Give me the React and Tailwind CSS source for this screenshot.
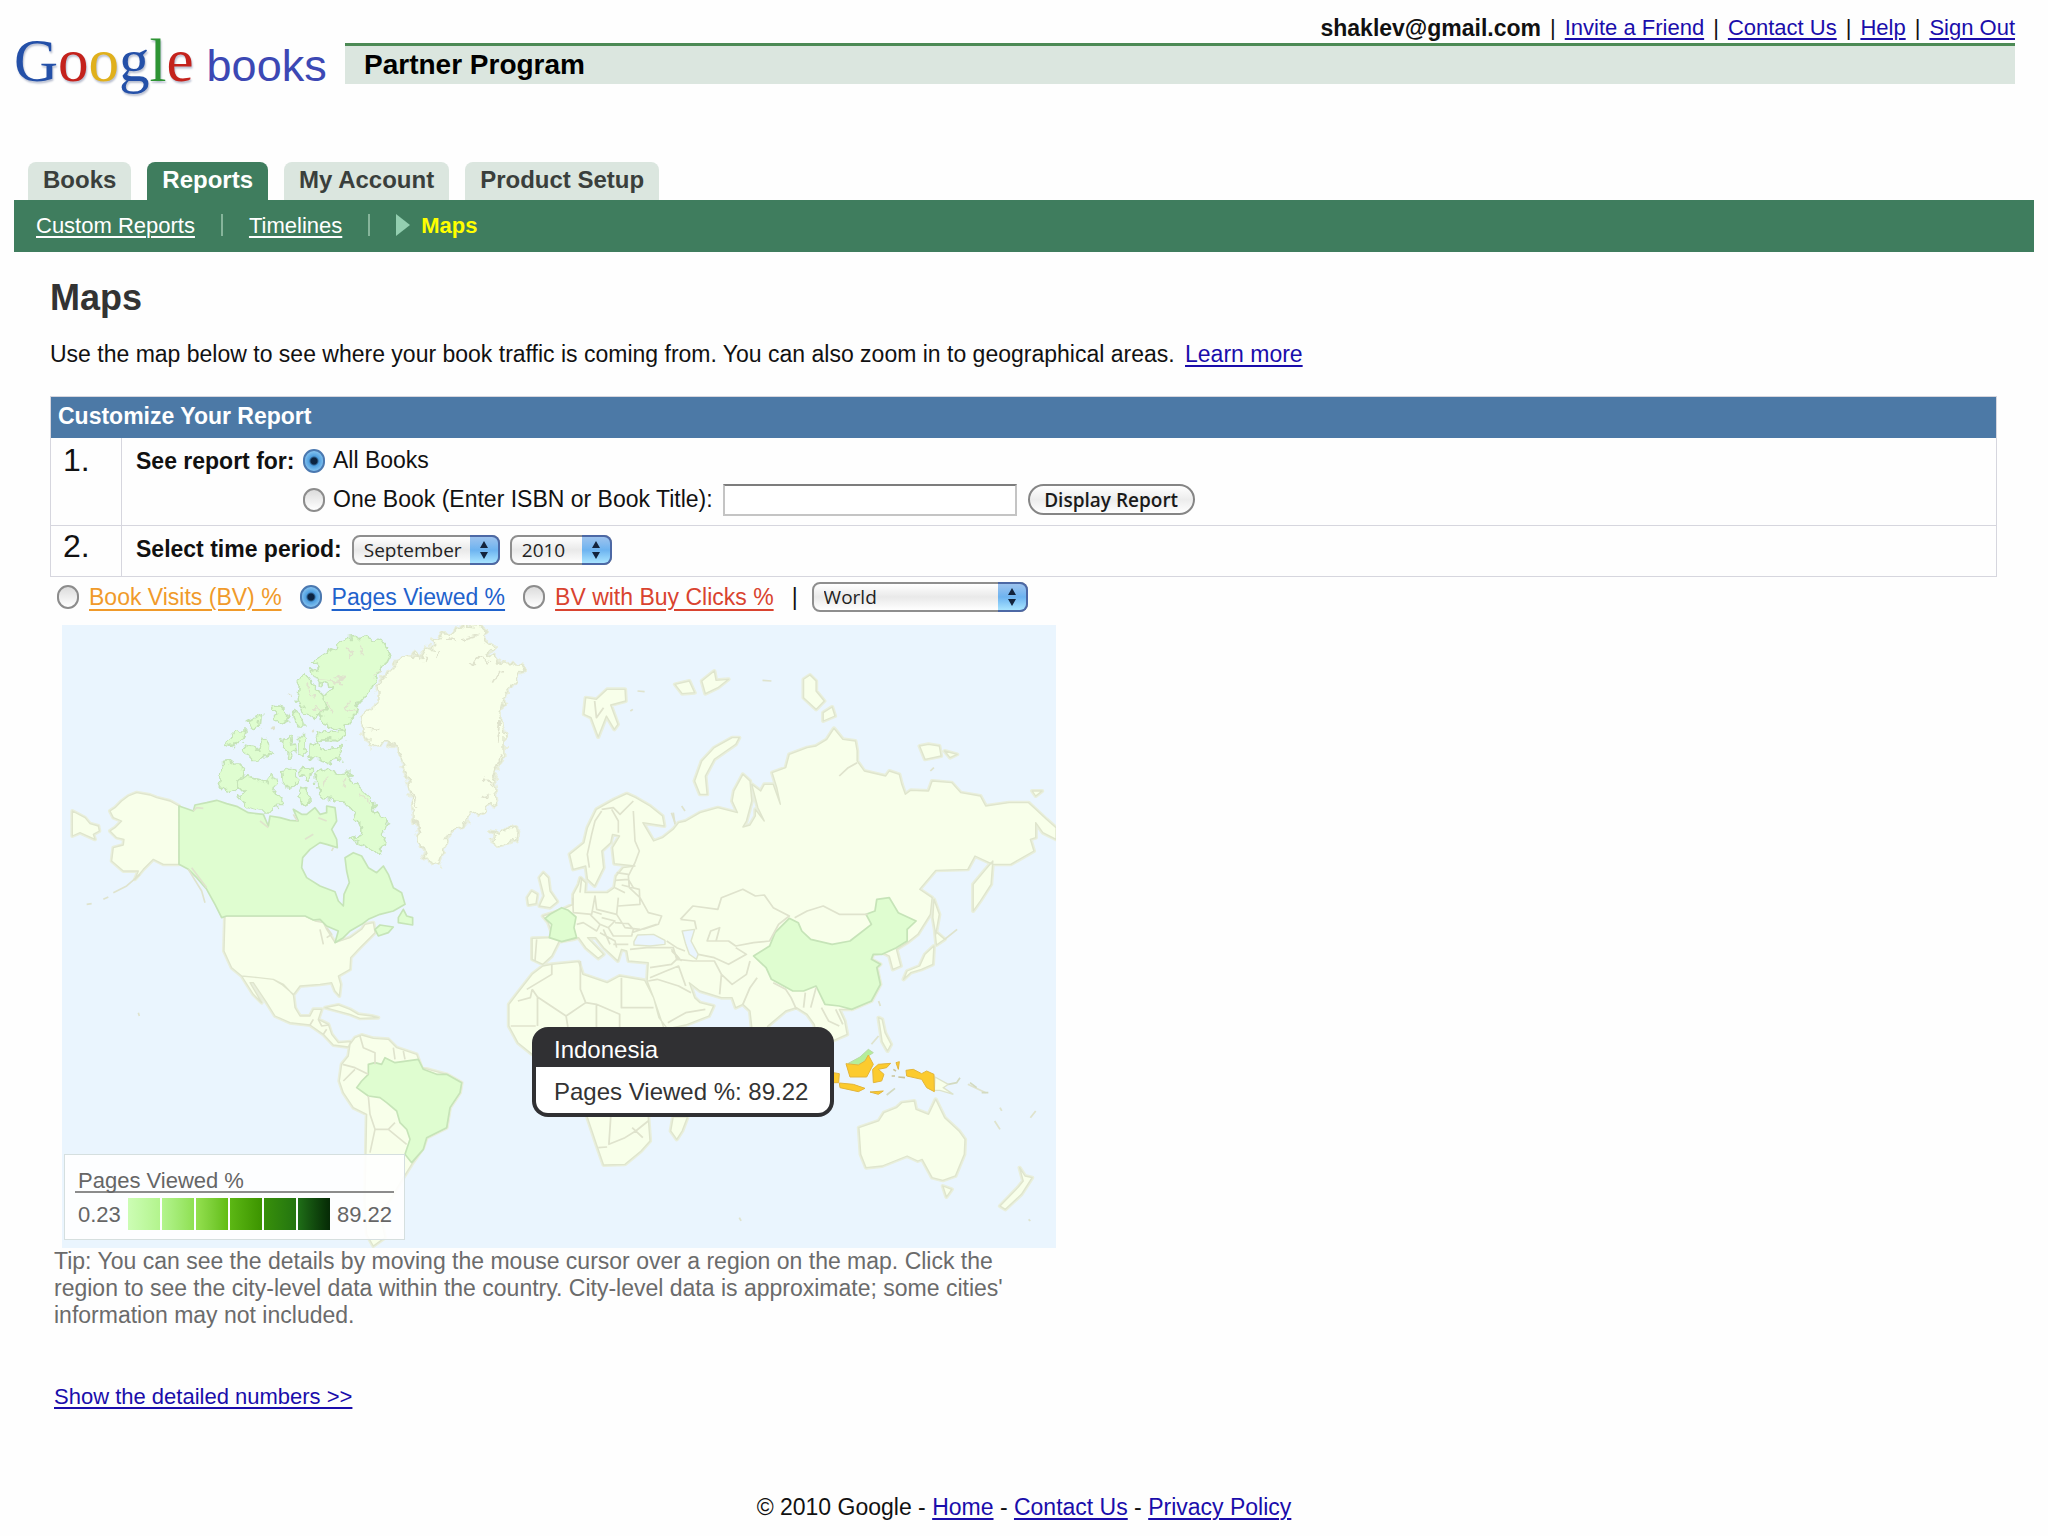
import React from "react";

const link = "text-[#1a0dab] underline underline-offset-3 decoration-2";

// Shapes are grouped by map sheet; every sheet has its own origin and scale.
const americas = {
  transform: "translate(60 620) scale(0.33333)",
  land: [
    "M357,555 330,540 290,530 270,522 230,515 205,525 185,540 165,560 150,570 160,590 185,600 165,620 150,630 170,650 192,655 190,672 160,680 155,720 190,750 235,750 225,775 250,745 280,715 310,730 357,730Z",
    "M37,570 75,590 90,608 115,615 118,630 100,640 105,655 60,635 37,645Z",
    "M495,885 735,885 765,900 790,905 800,925 825,965 870,950 905,925 915,910 940,905 945,935 900,980 872,1010 870,1045 835,1065 842,1090 838,1125 825,1110 815,1085 780,1090 720,1095 700,1122 670,1090 640,1075 595,1070 545,1065 515,1040 492,990Z",
    "M545,1065 595,1070 640,1075 665,1090 700,1120 705,1160 720,1185 750,1185 760,1165 785,1165 775,1195 805,1210 815,1240 835,1265 872,1262 865,1278 820,1272 790,1240 750,1212 690,1205 645,1185 620,1145 580,1085 570,1085 605,1145 580,1120Z",
    "M870,1270 885,1250 905,1242 940,1252 985,1255 1010,1280 1070,1300 1085,1340 1160,1360 1205,1385 1200,1415 1170,1460 1160,1520 1100,1550 1090,1580 1055,1630 1030,1670 1000,1720 960,1780 975,1850 940,1875 920,1840 915,1740 920,1480 880,1460 850,1415 838,1380 845,1330 865,1305Z",
    "M795,1160 835,1152 870,1165 895,1180 935,1185 955,1190 900,1192 870,1180Z",
  ],
  green: [
    "M357,555 385,565 400,570 405,552 440,545 470,538 500,548 530,556 565,575 610,580 625,615 630,585 660,590 690,598 715,600 700,565 725,580 740,580 765,560 780,580 800,575 800,555 825,560 830,600 815,625 830,655 832,680 800,670 780,665 750,685 728,710 725,740 740,770 780,795 825,812 835,840 850,855 852,820 868,785 860,750 855,710 880,695 905,705 925,740 950,755 970,735 985,760 1000,800 1025,815 1035,850 1000,870 960,880 925,895 905,910 870,930 850,950 825,965 835,930 800,915 780,895 760,897 735,885 500,885 485,890 465,850 440,805 410,770 385,745 357,730Z",
    "M1015,890 1030,865 1040,885 1058,890 1058,912 1015,905Z",
    "M945,925 960,912 1000,918 985,935 955,945Z",
    "M925,1360 925,1330 945,1325 965,1330 975,1310 1005,1325 1075,1315 1090,1345 1130,1360 1160,1360 1205,1385 1200,1415 1170,1460 1160,1520 1100,1550 1090,1585 1055,1625 1035,1600 1050,1555 1040,1525 1020,1505 1010,1470 980,1445 960,1430 925,1425 890,1400 905,1380Z",
  ],
  lines: [
    "M900,1245 910,1280 945,1295 945,1330",
    "M1000,1280 1005,1315M1030,1290 1035,1315",
    "M848,1330 885,1340 925,1360M885,1345 850,1380",
    "M925,1425 930,1480 945,1525 930,1595",
    "M945,1525 985,1525 1005,1505M985,1525 1040,1570",
    "M240,760 200,795 160,815M145,828 130,835M95,848 80,850",
    "M385,745 425,810 435,845M395,740 440,800",
    "M750,1212 760,1195M775,1195 785,1215 805,1212M790,1240 800,1225",
    "M780,925 790,970M800,920 815,940 800,950",
    "M235,1175 238,1185",
    "M400,570 410,560 430,562M600,600 625,620M700,580 712,600M760,640 735,655M800,600 775,590M815,690 820,680",
  ],
};

const arctic = {
  transform: "translate(60 620) scale(0.33333)",
  land: [
    "M1010,120 1030,108 1060,112 1072,92 1085,108 1100,80 1120,85 1115,55 1140,60 1150,35 1175,40 1210,12 1255,15 1275,28 1270,50 1305,78 1280,100 1310,112 1320,130 1350,128 1385,130 1392,150 1365,185 1335,220 1320,280 1335,340 1335,400 1310,450 1300,480 1310,540 1270,570 1225,580 1220,605 1165,635 1150,690 1135,732 1100,715 1080,660 1065,600 1050,510 1035,440 1015,385 970,362 935,375 915,340 905,290 960,245 960,215 950,195 975,165 1000,140Z",
    "M1290,630 1320,640 1345,618 1375,625 1370,655 1320,675 1295,660 1305,648Z",
  ],
  green: [
    "M765,455 800,445 830,455 865,450 880,480 910,510 940,540 945,570 960,590 990,610 965,625 975,650 960,695 935,690 920,685 895,665 870,655 900,640 905,620 895,600 870,560 855,545 830,540 790,530 768,500Z",
    "M550,465 590,475 620,490 635,450 650,490 645,520 670,550 650,550 640,570 600,570 560,560 535,530 550,510 530,490Z",
    "M485,425 520,420 550,445 545,475 520,505 500,515 478,490Z",
    "M680,440 705,445 708,490 690,503 668,485 665,460Z",
    "M720,440 758,442 745,475 725,470Z",
    "M730,500 745,520 748,545 725,550 720,520Z",
    "M825,80 850,55 885,50 920,48 970,65 993,95 975,130 960,150 950,170 920,220 890,255 885,280 865,300 855,330 790,310 780,290 800,260 790,225 815,200 780,190 755,150 780,140 755,125 800,95Z",
    "M735,155 755,185 790,225 800,265 765,295 735,270 712,235 715,185Z",
    "M750,375 765,365 780,385 840,380 845,415 800,425 750,410Z",
    "M775,335 820,330 858,335 850,362 820,355 770,358Z",
    "M548,385 560,370 590,375 598,390 610,350 640,390 620,405 575,420Z",
    "M500,370 525,330 558,330 550,360 520,380Z",
    "M670,355 695,350 705,395 685,405 665,380Z",
    "M712,350 735,350 735,410 715,400Z",
    "M640,250 670,260 690,300 665,310 645,290Z",
    "M700,275 720,280 735,315 710,315Z",
    "M565,300 605,278 600,320 580,325Z",
  ],
  lines: [
    "M820,165 855,170 825,190M860,75 880,95 870,110M780,180 850,185 830,160M870,240 850,265 885,270M800,240 820,280",
    "M740,190 760,230M765,260 790,275M860,470 850,500M895,520 930,545M800,460 795,500M900,70 905,100M940,165 965,150",
    "M1100,110 1090,125M1140,90 1130,105M1230,135 1250,110 1290,120M1300,185 1320,150M1200,60 1260,45M1160,60 1185,50",
    "M1055,510 1070,560M1065,590 1080,640M1320,300 1310,360M1325,400 1300,470M1270,470 1300,500M1260,520 1295,530",
    "M640,320 645,330M685,215 690,225M755,320 762,330M920,320 955,325",
  ],
};

const oldWorld = {
  transform: "translate(500 620) scale(0.35714 0.33333)",
  land: [
    "M205,745 195,700 235,665 245,620 270,565 320,535 355,518 380,530 420,555 455,585 460,615 400,605 430,660 455,650 485,625 500,605 520,600 560,575 610,560 665,575 650,540 655,510 665,490 680,460 700,480 705,540 690,600 680,618 700,612 715,585 715,565 740,600 722,560 705,490 730,510 740,490 765,490 785,550 775,500 762,455 800,440 810,400 860,380 885,375 915,355 935,322 960,355 995,360 1000,390 1000,420 1020,450 1080,465 1090,450 1118,460 1125,490 1135,520 1150,508 1200,510 1210,480 1265,485 1290,515 1345,525 1360,555 1425,545 1480,545 1500,565 1530,595 1557,620 1557,655 1520,635 1500,605 1500,650 1485,655 1495,690 1430,730 1380,730 1330,705 1310,745 1220,748 1175,805 1210,830 1205,880 1170,940 1140,965 1110,985 1122,1035 1100,1045 1090,1005 1070,995 1045,1000 1040,1015 1065,1030 1055,1040 1065,1090 1040,1140 985,1165 950,1165 965,1200 972,1240 930,1260 890,1260 880,1210 860,1180 830,1160 800,1170 750,1215 735,1260 715,1240 705,1218 700,1170 680,1150 660,1160 650,1130 620,1130 560,1110 530,1085 545,1130 560,1145 598,1155 585,1185 520,1212 460,1225 430,1130 412,1080 415,1025 360,1020 355,990 340,985 330,1020 310,1000 290,980 268,950 245,950 290,1000 275,1012 240,980 220,950 205,955 165,962 145,1005 120,1030 90,1015 90,952 150,950 135,905 120,885 165,870 205,850 205,820 220,790 225,770 240,785 238,815 300,815 320,800 325,765 345,740 378,735 320,728 315,680 335,645 315,640 310,665 285,690 290,740 265,795 245,775 240,735Z",
    "M120,1035 145,1030 220,1022 232,1060 300,1085 335,1065 405,1078 430,1130 445,1190 470,1225 500,1240 450,1350 415,1488 420,1560 395,1590 350,1630 290,1632 270,1570 245,1490 230,1400 180,1300 90,1300 50,1265 25,1215 25,1150 50,1115 90,1060Z",
    "M485,1488 478,1530 495,1555 510,1530 525,1488Z",
    "M240,230 270,235 300,205 350,205 352,240 310,252 330,310 320,325 298,285 275,348 255,290 235,280Z",
    "M490,190 530,180 545,215 510,218Z",
    "M565,180 600,150 605,178 640,175 610,200 575,218Z",
    "M650,350 670,350 660,370 600,415 575,465 580,520 560,520 545,480 565,420 600,380Z",
    "M850,175 868,162 885,180 885,210 908,240 885,265 850,230Z",
    "M905,275 930,258 938,285 905,300Z",
    "M1175,375 1200,370 1230,375 1235,405 1190,415Z",
    "M1245,390 1280,400 1260,410Z",
    "M1490,510 1518,510 1500,525Z",
    "M1380,720 1375,790 1345,840 1325,870 1325,790 1360,745Z",
    "M1215,835 1230,880 1220,940 1212,890Z",
    "M1218,930 1245,955 1222,972Z",
    "M1215,975 1212,1030 1180,1045 1150,1055 1130,1075 1140,1050 1175,1035 1190,1000Z",
    "M1060,1190 1070,1195 1078,1235 1095,1270 1085,1290 1070,1262Z",
    "M1110,1460 1125,1445 1160,1440 1165,1465 1200,1480 1220,1435 1245,1490 1285,1530 1302,1555 1300,1600 1275,1665 1240,1678 1210,1670 1182,1615 1170,1620 1140,1605 1070,1635 1025,1640 1010,1600 1005,1520 1060,1500 1075,1475Z",
    "M1240,1695 1265,1705 1250,1728Z",
    "M1455,1640 1470,1665 1490,1670 1460,1720 1415,1765 1400,1755 1450,1700 1465,1680Z",
  ],
  green: [
    "M810,892 835,905 845,930 870,955 930,970 980,960 1040,910 1025,880 1050,870 1055,835 1090,830 1115,875 1165,900 1140,925 1140,960 1110,980 1070,1000 1045,1000 1040,1015 1065,1030 1055,1040 1065,1090 1040,1140 985,1165 950,1155 910,1150 885,1095 850,1110 820,1110 760,1075 745,1040 710,1005 755,975 770,935Z",
  ],
  lines: [
    "M75,1105 145,1060 145,1030M90,1105 105,1128 185,1185 240,1145 225,1105 225,1020",
    "M105,1128 105,1215M240,1145 270,1150 270,1218M270,1150 335,1180 335,1218",
    "M340,1070 340,1160 430,1160M50,1140 85,1130 90,1105M185,1185 190,1218M30,1215 100,1215",
    "M310,1488 305,1570 350,1550 380,1530 415,1500M370,1520 400,1550M275,1580 300,1578",
    "M420,1070 465,1050 500,1035 520,1095M420,1040 480,1030 500,1010 480,985",
    "M495,1015 540,1020 600,1020 620,1060 615,1120M620,1060 650,1090 690,1060 700,1020M680,1150 700,1100 720,1070",
    "M415,1080 440,1075 500,1095 535,1115M575,1165 520,1175 470,1205",
    "M505,895 540,855 610,865 620,830 680,805 715,825 740,822 765,860 810,885 780,910 755,960 710,965 660,975 640,960 580,960 590,930 615,920 605,960M505,895 545,900 550,925",
    "M555,1000 600,1010 640,1030 690,1000 660,980",
    "M825,890 860,870 905,855 950,880 1030,880",
    "M765,1085 800,1105 815,1130 830,1165M855,1115 850,1160M885,1100 870,1160M900,1160 920,1200 950,1215M940,1165 960,1210",
    "M1245,955 1280,925M1060,1140 1065,1155M1040,1270 1060,1245M1500,1470 1485,1490M1385,1500 1400,1525M1310,1390 1360,1415M1400,1460 1405,1470M670,1790 675,1800",
    "M735,178 760,180M385,210 405,212M365,270 372,265M1480,1795 1485,1800",
    "M950,465 975,440 1000,425M265,240 270,290 290,260M480,575 490,605M1205,450 1215,440",
  ],
  seas: [
    "M375,962 385,942 430,940 462,958 462,970 420,975 375,972Z",
    "M510,930 545,925 535,960 555,1000 550,1015 530,1000 520,970Z",
  ],
};

const europe = {
  transform: "translate(500 780) scale(0.33333)",
  land: [
    "M118,290 130,275 145,290 150,330 172,362 150,380 118,375 132,345Z",
    "M82,350 95,330 112,340 108,368 85,372Z",
  ],
  green: [
    "M150,400 185,380 205,388 228,408 222,440 230,470 185,482 148,470 155,430 135,412Z",
  ],
  lines: [
    "M218,350 220,395 275,400 285,345 290,385 350,400 355,350",
    "M355,375 420,370 418,325 365,312M350,400 375,440 420,445",
    "M270,400 300,430 290,450 250,425 230,430M305,410 345,420 325,440 300,430M275,390 305,400",
    "M345,425 385,428 400,445 395,465 340,465 325,440M300,455 345,480 350,500M310,445 330,490M340,490 385,490",
    "M345,298 385,295 400,320M350,275 385,280M345,320 375,335",
    "M400,90 405,180 418,210 405,245 385,285 388,320 420,350 445,395 485,405 475,430 430,445",
    "M305,90 285,120 275,160 262,220 268,260M335,85 355,120 355,155M305,85 340,80 360,100 400,60",
    "M390,505 440,500 520,500 530,535M110,475 105,540M395,455 470,430",
    "M500,480 530,500 555,510M515,510 545,540",
    "M520,95 525,130M545,75 555,90M245,290 240,335",
  ],
};

const indonesia = [
  "M318,488 355,492 375,480 385,462 400,490 380,528 330,528Z",
  "M398,505 415,490 452,487 440,500 415,505 432,520 425,540 400,545Z",
  "M498,508 520,505 545,518 560,510 582,520 583,572 560,560 545,535 500,525Z",
  "M298,546 340,550 375,562 355,572 300,560Z",
  "M280,515 298,518 296,545 280,545Z",
  "M390,573 430,570 415,580Z",
  "M468,485 478,482 475,505Z",
];

function Sheet({ sheet }) {
  return (
    <g transform={sheet.transform} strokeLinejoin="round">
      <path d={sheet.land.join("")} fill="#f8ffea" stroke="#e9efdc" strokeWidth="12" />
      <path d={sheet.land.join("")} fill="#f8ffea" stroke="#dfe5cd" strokeWidth="4" />
      {sheet.seas && <path d={sheet.seas.join("")} fill="#eaf5fe" stroke="#dfe5cd" strokeWidth="4" />}
      <path d={sheet.green.join("")} fill="#dffdd0" stroke="#c6e4b8" strokeWidth="5" />
      <path d={sheet.lines.join("")} fill="none" stroke="#dfe3cd" strokeWidth="5" />
    </g>
  );
}

function WorldMap() {
  return (
    <svg viewBox="62 624 994 623" className="block w-full bg-[#eaf5fe]" role="img" aria-label="World map">
      <defs>
        <filter id="fjords" x="-5%" y="-5%" width="110%" height="110%" colorInterpolationFilters="sRGB">
          <feTurbulence type="fractalNoise" baseFrequency="0.13" numOctaves="2" seed="4" />
          <feDisplacementMap in="SourceGraphic" scale="11" xChannelSelector="R" yChannelSelector="G" />
        </filter>
      </defs>
      <Sheet sheet={americas} />
      <g filter="url(#fjords)">
        <Sheet sheet={arctic} />
      </g>
      <Sheet sheet={oldWorld} />
      <Sheet sheet={europe} />
      <g transform="translate(740 900) scale(0.33333)">
        <path d="M585,528 625,550 610,560 640,580 600,568 583,568Z" fill="#f8ffea" stroke="#dde3ca" strokeWidth="4" />
        <path d="M625,550 650,545 660,530M690,545 710,560M725,575 745,575M440,582 465,562" fill="none" stroke="#d3dac0" strokeWidth="5" />
        <path d="M325,487 360,468 385,445 400,455 385,465 370,485 350,492Z" fill="#b4ee9a" stroke="#b9d9a6" strokeWidth="3" />
        <path d={indonesia.join("")} fill="#fccb2e" stroke="#e2b53a" strokeWidth="3" />
        <path d="M455,525 465,525M475,528 495,530M460,505 468,510" stroke="#c9c39a" strokeWidth="5" />
      </g>
    </svg>
  );
}

function Radio({ className = "", ...props }) {
  return (
    <input
      type="radio"
      className={
        "h-6 w-[22px] shrink-0 appearance-none rounded-full border-2 border-[#8c8c8c] bg-linear-to-b from-[#dcdcdc] to-white checked:border-[#4a78b0] checked:bg-[radial-gradient(circle,#0c2340_0_3px,#4f9fe0_5px,#a9dcfb_100%)] " +
        className
      }
      {...props}
    />
  );
}

function MacSelect({ label, options, className }) {
  return (
    <span className={"relative inline-flex h-[30px] " + className}>
      <select
        aria-label={label}
        className="h-full w-full appearance-none rounded-lg border-2 border-[#8e8e8e] bg-linear-to-b from-white via-[#e9e9e9] to-white pl-[10px] font-['Open_Sans','Noto_Sans',sans-serif] text-[19px] leading-6 text-[#222]"
      >
        {options.map((o) => (
          <option key={o}>{o}</option>
        ))}
      </select>
      <span className="pointer-events-none absolute inset-y-0 right-0 flex w-[30px] items-center justify-center rounded-r-lg border-y-2 border-r-2 border-[#4c68a5] bg-linear-to-b from-[#9cc3ee] via-[#6db3f0] to-[#a8e4ff]">
        <svg viewBox="0 0 10 20" className="h-5 w-[10px]" aria-hidden="true">
          <path d="M5 1 9 8H1ZM5 19 1 12H9Z" fill="#13233c" />
        </svg>
      </span>
    </span>
  );
}

const tabs = ["Books", "Reports", "My Account", "Product Setup"];

const metrics = [
  { id: "bv", text: "Book Visits (BV) %", color: "text-[#f09a2a]" },
  { id: "pv", text: "Pages Viewed %", color: "text-[#1f62cc]" },
  { id: "bc", text: "BV with Buy Clicks %", color: "text-[#d9432f]" },
];

const swatches = [
  "from-[#ccfdb4] to-[#b3f48d]",
  "from-[#b3f48d] to-[#8fe052]",
  "from-[#94e04f] to-[#62bd12]",
  "from-[#5cb714] to-[#3c9400]",
  "from-[#38900a] to-[#23750f]",
  "from-[#1f6f17] to-[#062a06]",
];

export default function App() {
  return (
    <div className="min-h-screen bg-[#fefefe] font-['Liberation_Sans',Arial,sans-serif] text-[23px] leading-[27px] text-[#111]">
      <header className="flex items-start pt-[13px] pr-[33px] pl-[14px]">
        <a href="#" aria-label="Google books" className="mt-3 flex w-[331px] shrink-0 items-baseline whitespace-nowrap">
          <span className="font-['Liberation_Serif',serif] text-[61px] leading-[72px] text-[#2450a8] [text-shadow:1px_2px_2px_#b9bfd0]">
            G<span className="text-[#c4221c]">o</span>
            <span className="text-[#e0b01c]">o</span>g<span className="text-[#2e9434]">l</span>
            <span className="text-[#c4221c]">e</span>
          </span>
          <span className="ml-[13px] text-[45px] leading-[50px] text-[#3c48b4]">books</span>
        </a>
        <div className="flex-1">
          <nav className="flex h-[30px] items-center justify-end gap-[9px] text-[22px] leading-[30px]">
            <b className="text-[23px]">shaklev@gmail.com</b>|<a href="#" className={link}>Invite a Friend</a>|
            <a href="#" className={link}>Contact Us</a>|
            <a href="#" className={link}>Help</a>|
            <a href="#" className={link}>Sign Out</a>
          </nav>
          <div className="flex h-[41px] items-center border-t-3 border-[#4c8a55] bg-[#dbe6df] pb-[2px] pl-[19px] text-[28px] font-bold text-black">
            Partner Program
          </div>
        </div>
      </header>

      <div className="mx-[14px] mt-[65px]">
        <nav className="flex h-[38px] gap-4 pl-[14px] text-[24px] font-bold">
          {tabs.map((t) => (
            <a
              key={t}
              href="#"
              className={
                "flex items-center rounded-t-lg px-[15px] pb-1 " +
                (t === "Reports" ? "bg-[#3f7d5e] text-white" : "bg-[#dbe6df] text-[#3a3f3c]")
              }
            >
              {t}
            </a>
          ))}
        </nav>
        <nav className="flex h-[52px] items-center bg-[#3f7d5e] pb-[2px] pl-[22px] text-[22px] text-white">
          <a href="#" className="underline decoration-2 underline-offset-3">Custom Reports</a>
          <span className="mx-[26px] h-[22px] w-[2px] bg-[#86b59b]" />
          <a href="#" className="underline decoration-2 underline-offset-3">Timelines</a>
          <span className="mx-[26px] h-[22px] w-[2px] bg-[#86b59b]" />
          <svg viewBox="0 0 14 22" className="mr-[11px] h-[22px] w-[14px]" aria-hidden="true">
            <path d="M0 0 14 11 0 22Z" fill="#93cfb0" />
          </svg>
          <a href="#" className="font-bold text-[#ffff00]">Maps</a>
        </nav>
      </div>

      <main className="mr-[51px] ml-[50px]">
        <h1 className="pt-[26px] text-[36px] leading-10 font-bold text-[#333]">Maps</h1>
        <p className="mt-[23px]">
          Use the map below to see where your book traffic is coming from. You can also zoom in to geographical areas.{" "}
          <a href="#" className={"ml-1 " + link}>Learn more</a>
        </p>

        <table className="mt-7 w-full border-collapse border border-[#d6d6de] text-left">
          <thead>
            <tr className="h-[41px] bg-[#4c79a6] text-white">
              <th colSpan={2} className="px-[7px] pb-[2px] font-bold">Customize Your Report</th>
            </tr>
          </thead>
          <tbody>
            <tr className="h-[88px] border-b border-[#d6d6de]">
              <td className="w-[71px] border-r border-[#d6d6de] pt-1 pl-3 align-top text-[32px] leading-9">1.</td>
              <td className="pt-1 pl-[14px] align-top">
                <div className="grid grid-cols-[167px_1fr]">
                  <b className="leading-[38px]">See report for:</b>
                  <label className="flex h-[38px] items-center gap-2">
                    <Radio name="scope" defaultChecked />
                    All Books
                  </label>
                  <div className="col-start-2 flex h-10 items-center">
                    <label className="flex items-center gap-2">
                      <Radio name="scope" />
                      One Book (Enter ISBN or Book Title):
                    </label>
                    <input
                      type="text"
                      aria-label="ISBN or Book Title"
                      className="ml-[10px] h-8 w-[294px] border-2 border-[#c4c4c4] border-t-[#7d7d7d] bg-white px-1"
                    />
                    <button className="ml-[11px] h-[31px] w-[167px] rounded-full border-2 border-[#858585] bg-linear-to-b from-white via-[#ececec] to-white font-['Open_Sans','Noto_Sans',sans-serif] text-[19px] leading-6 font-semibold whitespace-nowrap text-[#1a1a1a]">
                      Display Report
                    </button>
                  </div>
                </div>
              </td>
            </tr>
            <tr className="h-[51px]">
              <td className="border-r border-[#d6d6de] pl-3 align-top text-[32px] leading-10">2.</td>
              <td className="pb-[3px] pl-[14px]">
                <div className="flex items-center">
                  <b className="mr-[10px]">Select time period:</b>
                  <MacSelect label="Month" options={["September"]} className="mr-[10px] w-[148px]" />
                  <MacSelect label="Year" options={["2010"]} className="w-[102px]" />
                </div>
              </td>
            </tr>
          </tbody>
        </table>

        <div className="mt-[5px] ml-[7px] flex h-[30px] items-center">
          {metrics.map((m) => (
            <span key={m.id} className="mr-[18px] flex items-center gap-[10px]">
              <Radio name="metric" aria-labelledby={m.id} defaultChecked={m.id === "pv"} />
              <a id={m.id} href="#" className={"underline decoration-2 underline-offset-4 " + m.color}>
                {m.text}
              </a>
            </span>
          ))}
          <span className="mr-[14px]">|</span>
          <MacSelect label="Region" options={["World"]} className="w-[216px]" />
        </div>

        <section className="relative mt-[13px] ml-3 max-w-[994px]">
          <WorldMap />
          <div className="absolute bottom-2 left-[2px] w-[341px] border border-[#d5dfdf] bg-white/90 px-[10px] pt-4 pb-[9px] text-[22px] text-[#666]">
            <div className="border-b-2 border-[#8c8c8c] pl-[3px] leading-5">Pages Viewed %</div>
            <div className="mt-[5px] flex items-center justify-between pr-[2px] pl-[3px]">
              0.23
              <span className="flex gap-[2px]">
                {swatches.map((s) => (
                  <span key={s} className={"h-8 w-8 bg-linear-to-r " + s} />
                ))}
              </span>
              89.22
            </div>
          </div>
          <div className="absolute top-[402px] left-[470px] w-[302px] rounded-2xl bg-[#303033] p-1 pt-0 text-[24px]">
            <div className="h-10 pl-[18px] leading-[46px] text-white">Indonesia</div>
            <div className="h-[46px] rounded-b-xl bg-white pl-[18px] leading-[50px] whitespace-nowrap text-[#333]">
              Pages Viewed %: 89.22
            </div>
          </div>
        </section>

        <p className="ml-1 max-w-[960px] text-[#6b6b6b]">
          Tip: You can see the details by moving the mouse cursor over a region on the map. Click the region to see the
          city-level data within the country. City-level data is approximate; some cities' information may not included.
        </p>
        <p className="mt-[54px] ml-1 text-[22px]">
          <a href="#" className={link}>Show the detailed numbers &gt;&gt;</a>
        </p>
      </main>

      <footer className="mt-[84px] text-center">
        © 2010 Google - <a href="#" className={link}>Home</a> - <a href="#" className={link}>Contact Us</a> -{" "}
        <a href="#" className={link}>Privacy Policy</a>
      </footer>
    </div>
  );
}
